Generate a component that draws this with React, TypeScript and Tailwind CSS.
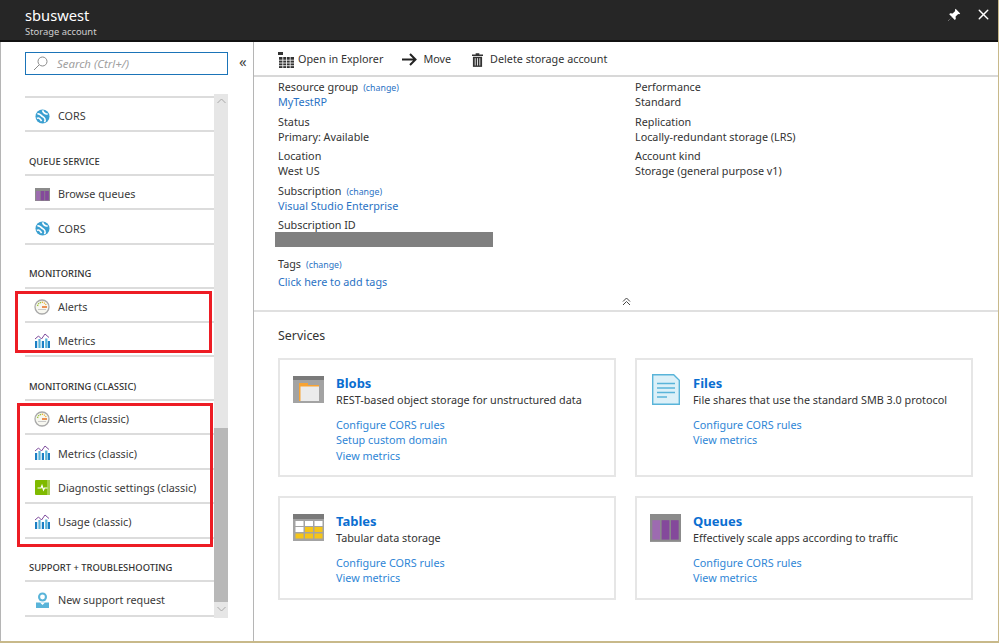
import React from "react";
import { X } from "lucide-react";

const font = { fontFamily: '"Noto Sans", "Open Sans", sans-serif' };

const Cors = () => (
  <svg width="15" height="15" viewBox="0 0 16 16">
    <circle cx="8" cy="8" r="7.5" fill="#3a9fd0" />
    <path d="M2.5 5.5C5 4 6 7 8 8s4 3.5 2 6M13.5 5C11 6 9 4 8 1.5M2 10c2-1 3.5 0 5 3" stroke="#fff" strokeWidth="1.7" fill="none" />
  </svg>
);
const Queue = ({ s = 15 }: { s?: number }) => (
  <svg width={s} height={s * 0.9} viewBox="0 0 20 18">
    <rect width="20" height="18" fill="#8b8b8b" />
    <rect x="1.5" y="4" width="5" height="12.5" fill="#9d6bb0" />
    <rect x="7.5" y="4" width="5" height="12.5" fill="#84499b" />
    <rect x="13.5" y="4" width="5" height="12.5" fill="#84499b" />
  </svg>
);
const Gauge = () => (
  <svg width="16" height="16" viewBox="0 0 16 16">
    <circle cx="8" cy="8" r="7" fill="#f7f7f0" stroke="#a9a9a9" strokeWidth="1.3" />
    <path d="M3.5 7A4.7 4.7 0 0 1 8 3.2" stroke="#9bc13c" strokeWidth="1.4" fill="none" strokeDasharray="1.2 .8" />
    <path d="M8 3.2A4.7 4.7 0 0 1 12 6" stroke="#e8b33a" strokeWidth="1.4" fill="none" strokeDasharray="1.2 .8" />
    <path d="M8 8h5" stroke="#e8762c" strokeWidth="1.6" />
    <path d="M4 10.5h8" stroke="#c9c9c9" strokeWidth="1" />
  </svg>
);
const Bars = () => (
  <svg className="-mt-[2px]" width="16" height="15" viewBox="0 0 16 15">
    <path d="M1 6l3.5-3 3 3 3.5-5 4 3.5" stroke="#7d4a9c" strokeWidth="1" fill="none" />
    <rect x="1" y="8" width="2.2" height="7" fill="#1b7fc4" />
    <rect x="4.4" y="6" width="2.2" height="9" fill="#59b4d9" />
    <rect x="7.8" y="8" width="2.2" height="7" fill="#1b7fc4" />
    <rect x="11.2" y="5.5" width="2.2" height="9.5" fill="#59b4d9" />
    <rect x="13.8" y="8" width="2.2" height="7" fill="#1b7fc4" />
  </svg>
);
const Diag = () => (
  <svg width="15" height="15" viewBox="0 0 15 15">
    <rect width="15" height="15" rx="1" fill="#7fba00" />
    <rect x="12" width="3" height="15" fill="#a5ce4d" />
    <path d="M2.5 8H6l1-2.5L8.5 10l1-2h3" stroke="#fff" strokeWidth="1.2" fill="none" />
  </svg>
);
const Support = () => (
  <svg width="13" height="16" viewBox="0 0 13 16">
    <circle cx="6.5" cy="5" r="4.5" fill="#59b4d9" />
    <circle cx="6.5" cy="5" r="2.4" fill="#fff" />
    <path d="M0 10.5h13V16H0z" fill="#59b4d9" />
    <path d="M4 10.5h5L6.5 13z" fill="#fff" />
  </svg>
);
const Blob = () => (
  <svg width="31" height="27" viewBox="0 0 31 27">
    <rect width="31" height="27" fill="#a3a3a3" />
    <path d="M0 0h31v4H0z" fill="#7a7a7a" />
    <path d="M6 7h9v2h11v16H6z" fill="#f7a333" />
    <rect x="7.5" y="10.5" width="18.5" height="14.5" fill="#ebebeb" />
  </svg>
);
const FileIcon = () => (
  <svg className="ml-[2px] -mt-[2px]" width="28" height="31" viewBox="0 0 28 31">
    <path d="M.7.7h21l5.6 5.6v24H.7z" fill="#dcf0f8" stroke="#59b4d9" strokeWidth="1.4" />
    <path d="M5 9.5h18M5 14h18M5 18.5h18M5 23h10" stroke="#59b4d9" strokeWidth="1.4" />
  </svg>
);
const TableIcon = () => (
  <svg width="31" height="27" viewBox="0 0 31 27">
    <rect width="31" height="27" fill="#a3a3a3" />
    <path d="M0 0h31v5H0z" fill="#7a7a7a" />
    {[2.5, 12, 21.5].flatMap((x, i) =>
      [7, 13, 19.5].map((y, j) => (
        <rect key={`${i}${j}`} x={x} y={y} width="8" height="5" fill={(i === 0 && j < 2) || j === 0 ? "#fff" : "#f5c518"} />
      ))
    )}
  </svg>
);
const Explorer = () => (
  <svg width="16" height="16" viewBox="0 0 16 16" fill="#333">
    <rect x="0" y="0" width="5" height="3" />
    <rect x="1" y="5" width="15" height="11" />
    <path d="M1 8.2h15M1 11h15M1 13.7h15M4.8 5v11M8.5 5v11M12.2 5v11" stroke="#fff" strokeWidth=".8" />
  </svg>
);
const Trash = () => (
  <svg width="11" height="14" viewBox="0 0 12 15" fill="#333">
    <path d="M4 0h4v1.5h4V3H0V1.5h4z" />
    <path d="M1 4h10v11H1z" />
    <path d="M3.5 5.5v8M6 5.5v8M8.5 5.5v8" stroke="#fff" strokeWidth=".9" />
  </svg>
);
const Pin = () => (
  <svg width="14" height="14" viewBox="0 0 14 14" fill="#fff">
    <path d="M8.6.8l4.6 4.6-1 .8-1-.3-2.6 2.6.2 2.4-1 1L4.9 9 1.2 13 1 12.8 5 9.1 2.2 6.3l1-1 2.4.2 2.6-2.6-.3-1z" />
  </svg>
);

const Row = ({ icon, label }: { icon: React.ReactNode; label: string }) => (
  <div className="flex h-[34.4px] items-center border-b-2 border-[#dcdcdc] pt-[4px] text-[10.8px] text-[#3a3a3a]">
    <div className="flex w-[33px] justify-center pl-[1px]">{icon}</div>
    <span>{label}</span>
  </div>
);
const Section = ({ label }: { label: string }) => (
  <div className="flex h-[43.7px] items-end border-b-2 border-[#dcdcdc] pb-[5px] pl-[4px] text-[9.4px] font-medium text-[#333]">
    {label}
  </div>
);

const Card = ({ icon, title, desc, links, h }: { icon: React.ReactNode; title: string; desc: string; links: string[]; h: string }) => (
  <div className={`flex ${h} border-2 border-[#e6e6e6] pl-[13px] pt-[15px]`}>
    <div className="flex h-[31px] w-[43px] justify-start pt-[1px]">{icon}</div>
    <div className="text-[10.8px] leading-[15px]">
      <div className="text-[13px] font-bold leading-[17px] text-[#0a6ed1]">{title}</div>
      <div className="text-[#333]">{desc}</div>
      <div className="mt-[10px] text-[#2f86d6]">
        {links.map((l) => (
          <div key={l} className="h-[15.3px]">{l}</div>
        ))}
      </div>
    </div>
  </div>
);

const Info = ({ label, value, change, blue }: { label: string; value: string; change?: boolean; blue?: boolean }) => (
  <div className="h-[34.5px] text-[10.8px] leading-[15px]">
    <div className="h-[15px] text-[#333]">
      {label}
      {change && <span className="ml-[5px] text-[8.8px] leading-none text-[#2a72c4]">(change)</span>}
    </div>
    <div className={blue ? "text-[#2a72c4]" : "text-[#333]"}>{value}</div>
  </div>
);

export default function App() {
  return (
    <div style={font} className="relative flex h-[643px] w-[999px] flex-col overflow-hidden border-r border-b-2 border-[#c8b98a] bg-white">
      <header className="flex h-[42px] shrink-0 items-start justify-between border-b-2 border-[#111] bg-[#262626] pl-[25px] pr-[6px] pt-[5px] text-white">
        <div>
          <div className="text-[14.7px] leading-[20px]">sbuswest</div>
          <div className="text-[9.4px] leading-[13px] text-[#cfcfcf]">Storage account</div>
        </div>
        <div className="flex items-center gap-[14px] pt-[1px]">
          <Pin />
          <X size={17} strokeWidth={2} />
        </div>
      </header>
      <div className="flex min-h-0 flex-1">
        <aside className="relative h-full w-[254px] shrink-0 border-x border-[#b5b5b5] pl-[24px]">
          <div className="flex h-[52px] items-start pt-[10px]">
            <div className="flex h-[23px] w-[203px] items-center border border-[#1b74b8] pl-[7px] text-[11.4px] italic text-[#a0a0a0]">
              <svg width="15" height="15" viewBox="0 0 15 15" fill="none" stroke="#8a8a8a" strokeWidth="1">
                <circle cx="9.5" cy="5.5" r="4.5" />
                <path d="M6 9l-5 5" />
              </svg>
              <span className="ml-[9px]">Search (Ctrl+/)</span>
            </div>
            <span className="ml-[11px] text-[15px] leading-[18px] text-[#444]">«</span>
          </div>
          <div className="flex h-[524px] w-[203px]">
            <div className="min-w-0 flex-1 overflow-hidden">
              <div className="h-[4px] border-b-2 border-[#dcdcdc]" />
              <Row icon={<Cors />} label="CORS" />
              <Section label="QUEUE SERVICE" />
              <Row icon={<Queue />} label="Browse queues" />
              <Row icon={<Cors />} label="CORS" />
              <Section label="MONITORING" />
              <Row icon={<Gauge />} label="Alerts" />
              <Row icon={<Bars />} label="Metrics" />
              <Section label="MONITORING (CLASSIC)" />
              <Row icon={<Gauge />} label="Alerts (classic)" />
              <Row icon={<Bars />} label="Metrics (classic)" />
              <Row icon={<Diag />} label="Diagnostic settings (classic)" />
              <Row icon={<Bars />} label="Usage (classic)" />
              <Section label="SUPPORT + TROUBLESHOOTING" />
              <Row icon={<Support />} label="New support request" />
            </div>
            <div className="flex w-[14px] shrink-0 flex-col bg-[#e6e6e6]">
              <div className="flex h-[14px] items-center justify-center">
                <svg width="9" height="6" viewBox="0 0 9 6" fill="none" stroke="#a8a8a8"><path d="M.5 5L4.5 1l4 4" /></svg>
              </div>
              <div className="mt-[320px] h-[174px] bg-[#b8b8b8]" />
              <div className="flex h-[14px] items-center justify-center">
                <svg width="9" height="6" viewBox="0 0 9 6" fill="none" stroke="#a8a8a8"><path d="M.5 1l4 4 4-4" /></svg>
              </div>
            </div>
          </div>
          <div className="absolute left-[14px] top-[249px] h-[62px] w-[197px] border-[3px] border-[#ed1c24]" />
          <div className="absolute left-[16px] top-[361px] h-[144px] w-[196px] border-[3px] border-[#ed1c24]" />
        </aside>
        <main className="relative min-w-0 flex-1">
          <div className="flex h-[35px] items-center border-b-2 border-[#d8d8d8] pl-[24px] pt-[2px] text-[10.8px] text-[#333]">
            <div className="flex items-center gap-[4px]"><Explorer /><span>Open in Explorer</span></div>
            <div className="ml-[19px] flex items-center gap-[6px]">
              <svg width="15" height="13" viewBox="0 0 15 13" fill="none" stroke="#222" strokeWidth="2"><path d="M0 6.5h13M8 1l5.5 5.5L8 12" /></svg>
              <span>Move</span>
            </div>
            <div className="ml-[21px] flex items-center gap-[7px]"><Trash /><span>Delete storage account</span></div>
          </div>
          <div className="relative h-[235px] border-b-2 border-[#e0e0e0] pl-[24px] pt-[2px]">
            <div className="grid grid-cols-[357px_1fr]">
              <div>
                <Info label="Resource group" change value="MyTestRP" blue />
                <Info label="Status" value="Primary: Available" />
                <Info label="Location" value="West US" />
                <Info label="Subscription" change value="Visual Studio Enterprise" blue />
                <div className="text-[10.8px] leading-[15px] text-[#333]">Subscription ID</div>
                <div className="-ml-[3px] h-[15px] w-[218px] bg-[#808080]" />
                <div className="mt-[9px] h-[15px] text-[8.8px] leading-[15px] text-[#333]">
                  <span className="text-[10.8px]">Tags</span>
                  <span className="ml-[5px] text-[#2a72c4]">(change)</span>
                </div>
                <div className="mt-[3px] text-[10.8px] leading-[15px] text-[#2a72c4]">Click here to add tags</div>
              </div>
              <div>
                <Info label="Performance" value="Standard" />
                <Info label="Replication" value="Locally-redundant storage (LRS)" />
                <Info label="Account kind" value="Storage (general purpose v1)" />
              </div>
            </div>
            <svg className="absolute bottom-[4px] left-[368px]" width="9" height="9" viewBox="0 0 9 9" fill="none" stroke="#444"><path d="M1 4.5L4.5 1 8 4.5M1 8L4.5 4.5 8 8" /></svg>
          </div>
          <div className="px-[24px] pt-[14px]">
            <div className="text-[12.4px] leading-[19px] text-[#333]">Services</div>
            <div className="mt-[13px] grid grid-cols-[338px_338px] gap-x-[19px] gap-y-[19px]">
              <Card h="h-[119px]" icon={<Blob />} title="Blobs" desc="REST-based object storage for unstructured data" links={["Configure CORS rules", "Setup custom domain", "View metrics"]} />
              <Card h="h-[119px]" icon={<FileIcon />} title="Files" desc="File shares that use the standard SMB 3.0 protocol" links={["Configure CORS rules", "View metrics"]} />
              <Card h="h-[104px]" icon={<TableIcon />} title="Tables" desc="Tabular data storage" links={["Configure CORS rules", "View metrics"]} />
              <Card h="h-[104px]" icon={<Queue s={31} />} title="Queues" desc="Effectively scale apps according to traffic" links={["Configure CORS rules", "View metrics"]} />
            </div>
          </div>
        </main>
      </div>
    </div>
  );
}
